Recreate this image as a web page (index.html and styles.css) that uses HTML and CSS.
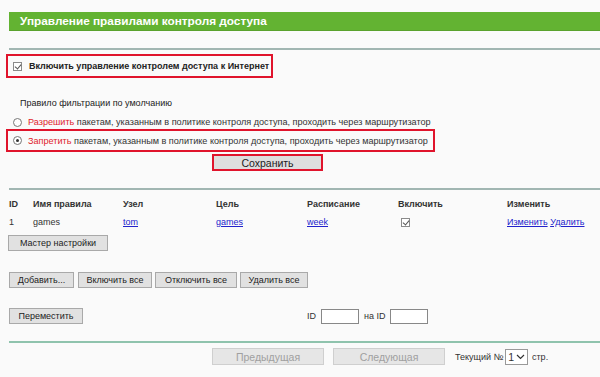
FILE: index.html
```html
<!DOCTYPE html>
<html lang="ru">
<head>
  <meta charset="UTF-8" />
  <title>Управление правилами контроля доступа</title>
  <link rel="stylesheet" href="styles.css">
</head>
<body>

<div class="page">
  <div class="title-bar">Управление правилами контроля доступа</div>
  <div class="divider"></div>

  <label class="enable-box">
    <span class="check checked"></span>
    Включить управление контролем доступа к Интернет
  </label>

  <div class="filter-title">Правило фильтрации по умолчанию</div>

  <label class="radio-row">
    <span class="radio"></span>
    <span class="red">Разрешить</span>&nbsp;пакетам, указанным в политике контроля доступа, проходить через маршрутизатор
  </label>
  <label class="radio-row selected">
    <span class="radio on"></span>
    <span class="red">Запретить</span>&nbsp;пакетам, указанным в политике контроля доступа, проходить через маршрутизатор
  </label>

  <div class="save-wrap">
    <button class="btn btn-save">Сохранить</button>
  </div>

  <div class="divider divider-low"></div>

  <div class="rules">
    <div class="th">ID</div>
    <div class="th">Имя правила</div>
    <div class="th">Узел</div>
    <div class="th">Цель</div>
    <div class="th">Расписание</div>
    <div class="th">Включить</div>
    <div class="th">Изменить</div>

    <div class="td">1</div>
    <div class="td">games</div>
    <div class="td"><a href="#">tom</a></div>
    <div class="td"><a href="#">games</a></div>
    <div class="td"><a href="#">week</a></div>
    <div class="td"><span class="check checked small"></span></div>
    <div class="td actions"><a href="#">Изменить</a> <a href="#">Удалить</a></div>
  </div>

  <button class="btn btn-wizard">Мастер настройки</button>

  <div class="btn-row">
    <button class="btn btn-add">Добавить...</button>
    <button class="btn btn-on">Включить все</button>
    <button class="btn btn-off">Отключить все</button>
    <button class="btn btn-del">Удалить все</button>
  </div>

  <div class="move-row">
    <button class="btn btn-move">Переместить</button>
    <div class="move-ids">
      <span>ID</span>
      <input type="text" class="id-input" />
      <span>на ID</span>
      <input type="text" class="id-input" />
    </div>
  </div>

  <div class="divider divider-green"></div>

  <div class="pager">
    <button class="btn btn-page" disabled>Предыдущая</button>
    <button class="btn btn-page btn-next" disabled>Следующая</button>
    <span class="current">Текущий №</span>
    <span class="page-select">1<svg width="9" height="6" viewBox="0 0 9 6"><path d="M1 1 L4.5 4.5 L8 1" fill="none" stroke="#333" stroke-width="1.2"/></svg></span>
    <span>стр.</span>
  </div>
</div>

</body>
</html>
```

FILE: styles.css
```css
/* Reset */
* {
  margin: 0;
  padding: 0;
  box-sizing: border-box;
}
body {
  background: #fafafa;
  font-family: 'Liberation Sans', Arial, sans-serif;
  font-size: 9px;
  color: #333;
  width: 600px;
  height: 377px;
  overflow: hidden;
}
.page {
  padding-left: 9px;
  padding-top: 12px;
}
/* Green header */
.title-bar {
  height: 19px;
  line-height: 19px;
  background: #63b332;
  border-bottom: 1px solid #5aa22d;
  color: #fff;
  font-weight: 700;
  font-size: 11.8px;
  padding-left: 11px;
}
.divider {
  height: 2px;
  background: #a1b6b2;
  margin-top: 17px;
}
.divider-low {
  margin-top: 17px;
}
.divider-green {
  margin-top: 17px;
  background: #8fc3ad;
}
/* Enable checkbox */
.enable-box {
  display: flex;
  align-items: center;
  gap: 7px;
  width: 267px;
  height: 24px;
  margin: 4px 0 0 -3px;
  padding-left: 5px;
  border: 2px solid #e0142c;
  font-weight: 700;
  color: #222;
  white-space: nowrap;
}
.check {
  display: inline-block;
  flex-shrink: 0;
  width: 9px;
  height: 9px;
  border: 1px solid #8a8a8a;
  background: #fff;
  position: relative;
}
.check.checked::after {
  content: '';
  position: absolute;
  left: 2px;
  top: 0;
  width: 3px;
  height: 5px;
  border: solid #555;
  border-width: 0 1px 1px 0;
  transform: rotate(40deg);
}
.filter-title {
  margin: 18px 0 0 11px;
  color: #222;
  height: 14px;
  line-height: 14px;
}
/* Radio rows */
.radio-row {
  display: flex;
  align-items: center;
  height: 14px;
  margin-top: 5px;
  padding-left: 4px;
  white-space: nowrap;
  font-size: 9.1px;
}
.radio-row.selected {
  width: 429px;
  height: 23px;
  margin: 0 0 0 -3px;
  padding-left: 5px;
  border: 2px solid #e0142c;
}
.radio {
  display: inline-block;
  flex-shrink: 0;
  width: 9px;
  height: 9px;
  border: 1px solid #777;
  border-radius: 50%;
  background: #fff;
  margin-right: 6px;
  position: relative;
}
.radio.on::after {
  content: '';
  position: absolute;
  left: 2px;
  top: 2px;
  width: 3px;
  height: 3px;
  border-radius: 50%;
  background: #333;
}
.red {
  color: #e0242c;
}
/* Buttons */
.btn {
  font-family: 'Liberation Sans', Arial, sans-serif;
  font-size: 9px;
  color: #222;
  background: #e1e1e1;
  border: 1px solid #a9a9a9;
  height: 16px;
  padding: 0 4px;
  line-height: 14px;
}
.save-wrap {
  margin: 2px 0 0 203px;
}
.btn-save {
  width: 111px;
  height: 17px;
  border: 2px solid #e0142c;
  font-size: 10.5px;
  background: #dedede;
}
/* Rules table */
.rules {
  display: grid;
  grid-template-columns: 24px 90px 93px 91px 91px 109px auto;
  margin-top: 5px;
  color: #333;
}
.th {
  font-weight: 700;
  height: 18px;
  line-height: 18px;
}
.td {
  height: 18px;
  line-height: 18px;
  display: flex;
  align-items: center;
}
.td:first-child {
  padding-left: 1px;
}
.td.actions {
  display: block;
}
.check.small {
  margin-left: 3px;
}
a {
  color: #2222cc;
  text-decoration: underline;
}
.btn-wizard {
  margin: 4px 0 0 -1px;
  width: 100px;
}
.btn-row {
  display: flex;
  margin: 21px 0 0 0;
}
.btn-add {
  width: 65px;
}
.btn-on {
  width: 74px;
  margin-left: 4px;
}
.btn-off {
  width: 82px;
  margin-left: 3px;
}
.btn-del {
  width: 68px;
  margin-left: 3px;
}
.move-row {
  display: flex;
  align-items: center;
  margin-top: 20px;
}
.btn-move {
  width: 74px;
}
.move-ids {
  display: flex;
  align-items: center;
  margin-left: 224px;
  gap: 5px;
}
.id-input {
  width: 38px;
  height: 15px;
  border: 1px solid #888;
  background: #fff;
}
/* Pager */
.pager {
  display: flex;
  align-items: center;
  margin: 5px 0 0 203px;
  color: #333;
}
.btn-page {
  width: 112px;
  height: 17px;
  color: #a0a0a0;
  background: #e6e6e6;
  border-color: #cfcfcf;
  font-size: 10.5px;
}
.btn-next {
  margin-left: 9px;
}
.current {
  margin-left: 10px;
}
.page-select {
  display: inline-flex;
  align-items: center;
  gap: 2px;
  height: 16px;
  border: 1px solid #999;
  background: #fff;
  padding: 0 2px;
  margin: 0 4px 0 2px;
  font-size: 10.5px;
}
```
